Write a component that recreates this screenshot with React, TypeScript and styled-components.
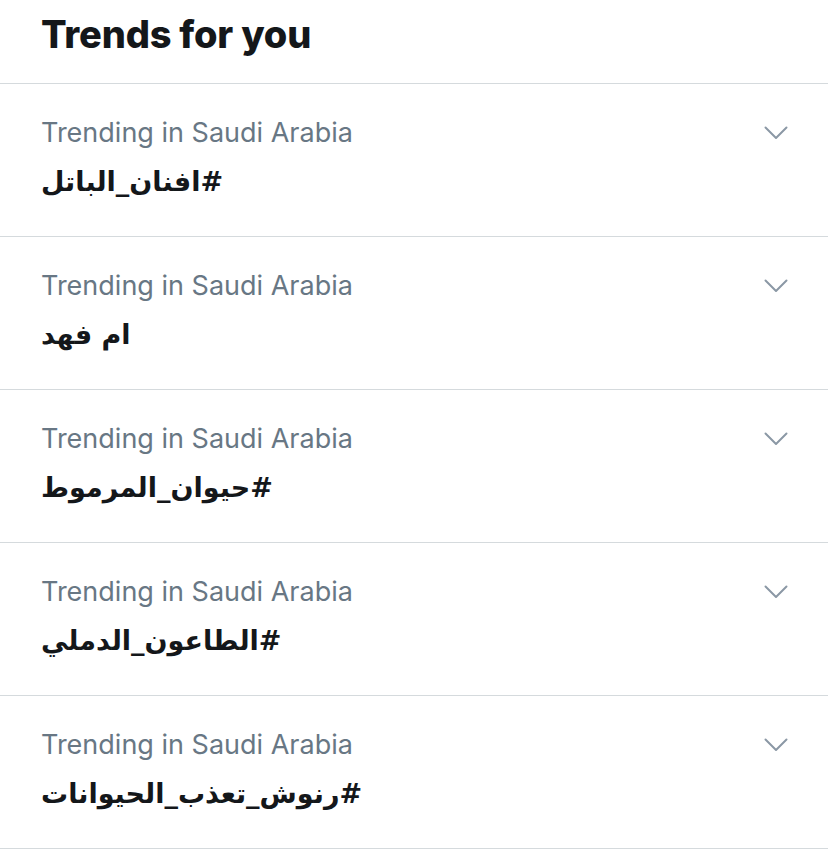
import { createGlobalStyle, styled } from "styled-components";

const Global = createGlobalStyle`
  body {
    margin: 0;
    background: #ffffff;
    font-family: Inter, "Liberation Sans", sans-serif;
  }
`;

const trends = [
  "#افنان_الباتل",
  "ام فهد",
  "#حيوان_المرموط",
  "#الطاعون_الدملي",
  "#رنوش_تعذب_الحيوانات",
];

const Chevron = () => (
  <svg width="24" height="14" viewBox="0 0 24 14" fill="none">
    <path d="M1.5 1.5L12 12L22.5 1.5" stroke="#8b98a5" strokeWidth="2" strokeLinecap="round" strokeLinejoin="round" />
  </svg>
);

const App = () => {
  return (
    <Panel>
      <Global />
      <Header>Trends for you</Header>
      {trends.map((t) => (
        <Row key={t}>
          <Info>
            <Context>Trending in Saudi Arabia</Context>
            <Topic dir="rtl">{t}</Topic>
          </Info>
          <MoreButton>
            <Chevron />
          </MoreButton>
        </Row>
      ))}
    </Panel>
  );
};

const Panel = styled.div`
  width: 828px;
  display: flex;
  flex-direction: column;
`;

const Header = styled.h2`
  margin: 0;
  height: 84px;
  padding: 11px 41px 0;
  box-sizing: border-box;
  font-size: 38px;
  font-weight: 800;
  color: #14171a;
  letter-spacing: -0.2px;
  border-bottom: 1px solid #d5dadd;
`;

const Row = styled.div`
  height: 153px;
  box-sizing: border-box;
  border-bottom: 1px solid #d5dadd;
  display: flex;
  justify-content: space-between;
  align-items: flex-start;
  padding: 0 40px 0 41px;
`;

const Info = styled.div`
  display: flex;
  flex-direction: column;
  padding-top: 33px;
`;

const Context = styled.div`
  font-size: 27px;
  line-height: 32px;
  color: #687784;
`;

const Topic = styled.div`
  font-family: "DejaVu Sans", sans-serif;
  font-weight: 700;
  font-size: 27px;
  line-height: 46px;
  padding-top: 10px;
  color: #14171a;
  text-align: left;
  unicode-bidi: plaintext;
`;

const MoreButton = styled.div`
  padding-top: 42px;
  display: flex;
`;

export default App;
